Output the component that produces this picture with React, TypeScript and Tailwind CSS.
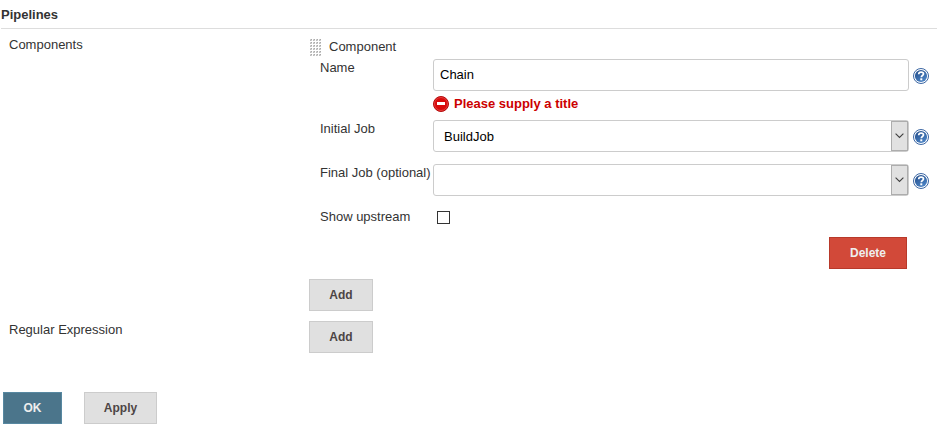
import React from "react";

function HelpIcon() {
  return (
    <svg width="16" height="16" viewBox="0 0 16 16" className="block shrink-0">
      <defs>
        <linearGradient id="help" x1="0" y1="0" x2="0.6" y2="1">
          <stop offset="0" stopColor="#204a87" />
          <stop offset="1" stopColor="#4b83c4" />
        </linearGradient>
      </defs>
      <circle cx="8" cy="8" r="7.5" fill="#fff" stroke="#3b66a3" strokeWidth="1" />
      <circle cx="8" cy="8" r="6.1" fill="url(#help)" />
      <path
        d="M5.7 6.3C5.7 4.7 6.7 4.1 8.1 4.1c1.4 0 2.4.7 2.4 1.9 0 1.5-2.2 1.5-2.2 3.2"
        fill="none"
        stroke="#fff"
        strokeWidth="1.7"
      />
      <rect x="7.3" y="10.3" width="2" height="2" fill="#fff" />
    </svg>
  );
}

function ErrorIcon() {
  return (
    <svg width="16" height="16" viewBox="0 0 16 16" className="block shrink-0">
      <circle cx="8" cy="8" r="7.5" fill="#cc0000" stroke="#b50f0f" />
      <circle cx="8" cy="8" r="6.5" fill="#d90b0b" stroke="#e84a4a" strokeWidth="0.8" />
      <rect x="4" y="6" width="8" height="3" fill="#fff" />
    </svg>
  );
}

function DragHandle() {
  const dots = [];
  for (let r = 0; r < 6; r++) {
    for (let c = 0; c < 4; c++) {
      dots.push(
        <g key={`${r}-${c}`}>
          <rect x={c * 3} y={r * 3} width="2" height="2" fill="#cfcfcf" />
          <rect x={c * 3 + 1} y={r * 3} width="1" height="1" fill="#aaaaaa" />
          <rect x={c * 3} y={r * 3 + 1} width="1" height="1" fill="#bcbcbc" />
        </g>,
      );
    }
  }
  return (
    <svg width="12" height="18" viewBox="0 0 12 18" className="block shrink-0">
      {dots}
    </svg>
  );
}

function Button({ className, children }: { className: string; children: React.ReactNode }) {
  return (
    <button className={`block h-8 border text-center text-[12px] font-bold leading-[30px] ${className}`}>
      {children}
    </button>
  );
}

const gray = "bg-[#e0e0e0] border-[#cccccc] text-[#4d4545]";

function Field({ label, children }: { label: string; children: React.ReactNode }) {
  return (
    <div className="flex h-11 items-start pl-[11px]">
      <div className="w-[113px] shrink-0 whitespace-nowrap leading-[18px]">{label}</div>
      {children}
    </div>
  );
}

function Select({ value }: { value: string }) {
  return (
    <>
      <div className="flex h-8 w-[476px] shrink-0 rounded-[3px] border border-[#cccccc] bg-white text-black">
        <span className="flex-1 pl-[10px] leading-[31px]">{value}</span>
        <span className="flex w-[17px] items-center justify-center border border-[#adadad] bg-[#e1e1e1]">
          <svg width="9" height="6" viewBox="0 0 9 6">
            <path d="M0.6 0.6L4.5 4.5L8.4 0.6" fill="none" stroke="#404040" strokeWidth="1.1" />
          </svg>
        </span>
      </div>
      <div className="pl-1 pt-[9px]">
        <HelpIcon />
      </div>
    </>
  );
}

export default function App() {
  return (
    <div className="h-[435px] w-[937px] overflow-hidden bg-white font-['Liberation_Sans',Arial,sans-serif] text-[13px] text-[#333333]">
      <div className="ml-px h-[29px] border-b border-[#dddddd] pt-[6px] font-bold leading-[18px]">Pipelines</div>
      <div className="flex h-[292px]">
        <div className="w-[309px] shrink-0 pl-[9px] pt-[7px] leading-[18px]">Components</div>
        <div className="flex-1">
          <div className="flex h-[30px] items-start pl-px pt-[10px]">
            <DragHandle />
            <span className="-mt-px pl-[7px] leading-[18px]">Component</span>
          </div>
          <div className="flex h-[61px] items-start pl-[11px]">
            <div className="w-[113px] leading-[18px]">Name</div>
            <div className="w-[476px]">
              <div className="h-8 rounded-[3px] border border-[#cccccc] bg-white pl-[6px] leading-[30px] text-black">
                Chain
              </div>
              <div className="mt-[5px] flex h-4 items-center gap-[5px] font-bold text-[#cc0000]">
                <ErrorIcon />
                <span className="leading-4">Please supply a title</span>
              </div>
            </div>
            <div className="pl-1 pt-[9px]">
              <HelpIcon />
            </div>
          </div>
          <Field label="Initial Job">
            <Select value="BuildJob" />
          </Field>
          <Field label="Final Job (optional)">
            <Select value="" />
          </Field>
          <div className="flex h-[29px] items-start pl-[11px]">
            <div className="w-[117px] leading-[18px]">Show upstream</div>
            <div className="mt-[3px] h-[13px] w-[13px] border border-[#333333] bg-white" />
          </div>
          <div className="flex h-[42px] justify-end pr-[30px]">
            <Button className="w-[78px] border-[#b8392a] bg-[#d24939] text-[#eeeeee]">Delete</Button>
          </div>
          <Button className={`w-16 ${gray}`}>Add</Button>
        </div>
      </div>
      <div className="flex h-[71px]">
        <div className="w-[309px] shrink-0 pl-[9px] leading-[18px]">Regular Expression</div>
        <Button className={`w-16 ${gray}`}>Add</Button>
      </div>
      <div className="flex gap-[22px] pl-[3px]">
        <Button className="w-[59px] border-[#5788a1] bg-[#4b758b] text-[#eeeeee]">OK</Button>
        <Button className={`w-[73px] ${gray}`}>Apply</Button>
      </div>
    </div>
  );
}
